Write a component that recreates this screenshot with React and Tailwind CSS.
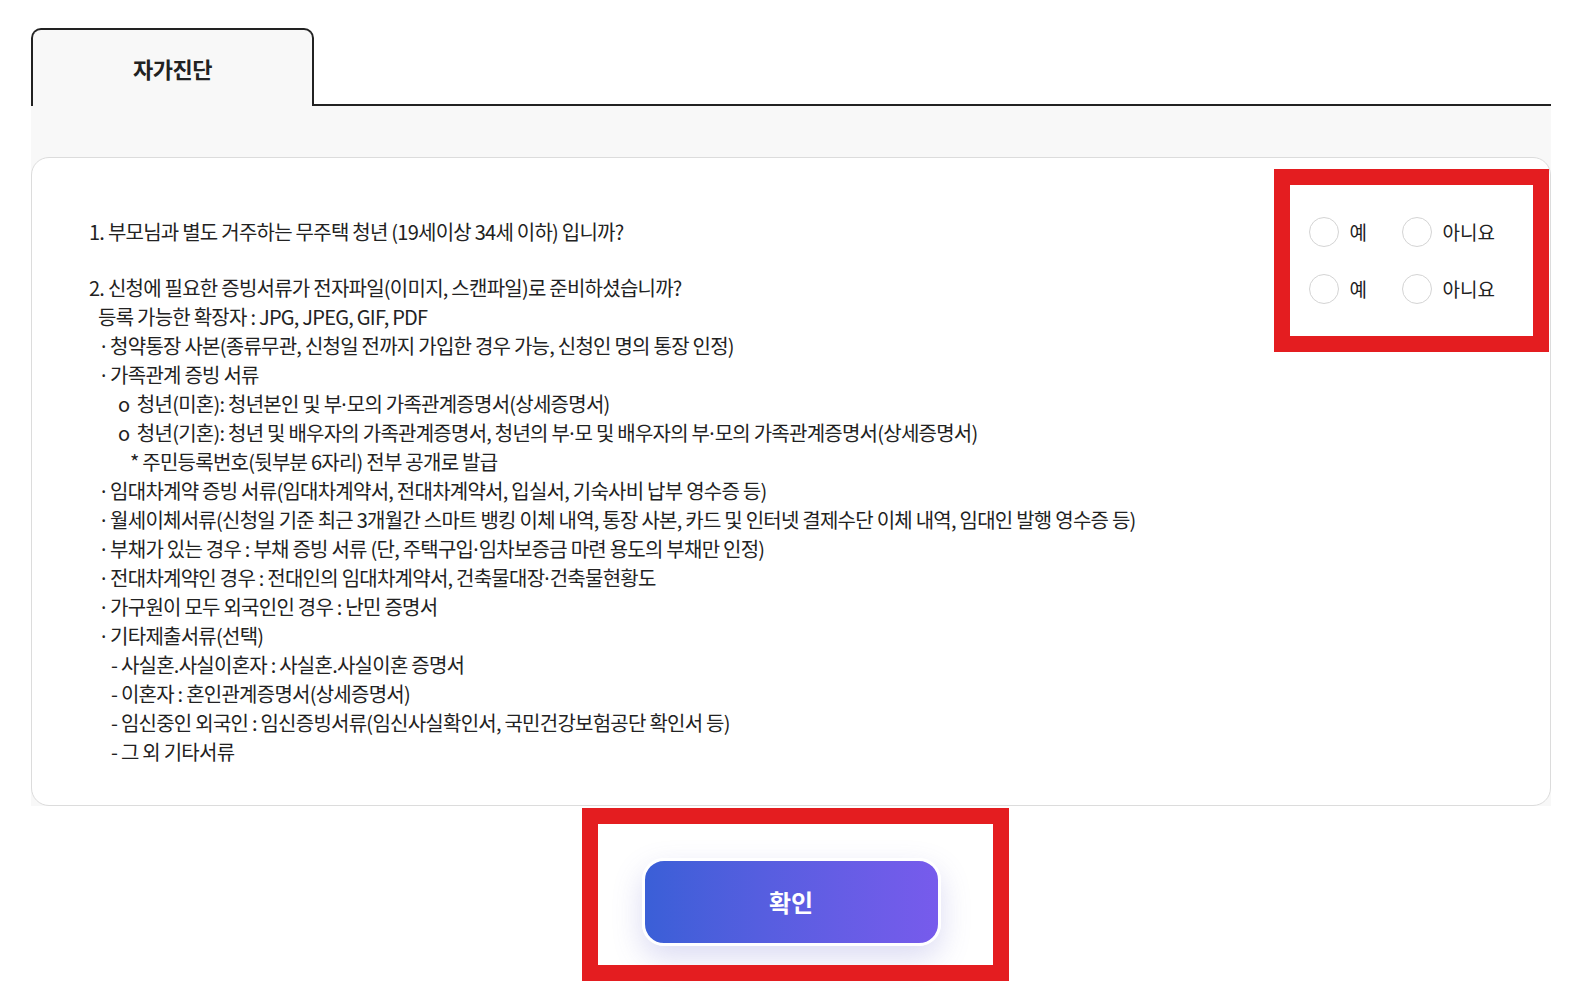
const lines = [
   { text: '2. 신청에 필요한 증빙서류가 전자파일(이미지, 스캔파일)로 준비하셨습니까?', indent: 'pl-0' },
   { text: '등록 가능한 확장자 : JPG, JPEG, GIF, PDF', indent: 'pl-[9px]' },
   { text: '· 청약통장 사본(종류무관, 신청일 전까지 가입한 경우 가능, 신청인 명의 통장 인정)', indent: 'pl-[12px]' },
   { text: '· 가족관계 증빙 서류', indent: 'pl-[12px]' },
   { text: 'o\u00a0 청년(미혼): 청년본인 및 부·모의 가족관계증명서(상세증명서)', indent: 'pl-[29px]' },
   { text: 'o\u00a0 청년(기혼): 청년 및 배우자의 가족관계증명서, 청년의 부·모 및 배우자의 부·모의 가족관계증명서(상세증명서)', indent: 'pl-[29px]' },
   { text: '* 주민등록번호(뒷부분 6자리) 전부 공개로 발급', indent: 'pl-[41px]' },
   { text: '· 임대차계약 증빙 서류(임대차계약서, 전대차계약서, 입실서, 기숙사비 납부 영수증 등)', indent: 'pl-[12px]' },
   { text: '· 월세이체서류(신청일 기준 최근 3개월간 스마트 뱅킹 이체 내역, 통장 사본, 카드 및 인터넷 결제수단 이체 내역, 임대인 발행 영수증 등)', indent: 'pl-[12px]' },
   { text: '· 부채가 있는 경우 : 부채 증빙 서류 (단, 주택구입·임차보증금 마련 용도의 부채만 인정)', indent: 'pl-[12px]' },
   { text: '· 전대차계약인 경우 : 전대인의 임대차계약서, 건축물대장·건축물현황도', indent: 'pl-[12px]' },
   { text: '· 가구원이 모두 외국인인 경우 : 난민 증명서', indent: 'pl-[12px]' },
   { text: '· 기타제출서류(선택)', indent: 'pl-[12px]' },
   { text: '- 사실혼.사실이혼자 : 사실혼.사실이혼 증명서', indent: 'pl-[22px]' },
   { text: '- 이혼자 : 혼인관계증명서(상세증명서)', indent: 'pl-[22px]' },
   { text: '- 임신중인 외국인 : 임신증빙서류(임신사실확인서, 국민건강보험공단 확인서 등)', indent: 'pl-[22px]' },
   { text: '- 그 외 기타서류', indent: 'pl-[22px]' },
];

// the middle dot is narrow in the original, so set it in a latin face
function Line({ text }) {
   const parts = text.split('·');
   return parts.map((p, i) => (
      <span key={i}>
         {i > 0 && (
            <span className="font-['Noto_Sans'] leading-none tracking-normal">·</span>
         )}
         {p}
      </span>
   ));
}

function Radio({ label }) {
   return (
      <label className="flex items-center gap-[11px]">
         <span className="h-[30px] w-[30px] rounded-full border border-[#d4d4d4] bg-white" />
         <span className="text-[19px] text-[#222]">{label}</span>
      </label>
   );
}

function RadioRow() {
   return (
      <div className="grid grid-cols-[93px_auto] items-center">
         <Radio label="예" />
         <Radio label="아니요" />
      </div>
   );
}

export default function App() {
   return (
      <div
         className="relative min-h-[995px] bg-white px-[31px] pt-[28px] text-[#222]"
         style={{ fontFamily: '"Noto Sans CJK KR", "Noto Sans", sans-serif' }}
      >
         <div className="w-[1520px]">
            {/* tabs */}
            <div className="flex items-end">
               <div className="flex h-[78px] w-[283px] items-center justify-center rounded-t-[10px] border-2 border-b-0 border-[#222] bg-[#f8f8f8] pt-[1px] text-[22px] font-bold tracking-[-0.5px]">
                  자가진단
               </div>
               <div className="flex-1 border-b-2 border-[#222]" />
            </div>

            {/* panel */}
            <div className="bg-[#f8f8f8] pt-[51px]">
               <div className="flex h-[649px] justify-between rounded-[18px] border border-[#dcdcdc] bg-white pl-[57px] pr-[55px] pt-[59px]">
                  <div className="text-[20px] leading-[29px] tracking-[-0.75px] text-[#222]">
                     <p>1. 부모님과 별도 거주하는 무주택 청년 (19세이상 34세 이하) 입니까?</p>
                     <div className="h-[27px]" />
                     {lines.map((l, i) => (
                        <p key={i} className={`h-[29px] whitespace-nowrap ${l.indent}`}>
                           <Line text={l.text} />
                        </p>
                     ))}
                  </div>
                  <div className="flex flex-col gap-[27px]">
                     <RadioRow />
                     <RadioRow />
                  </div>
               </div>
            </div>

            {/* button */}
            <div className="flex justify-center pt-[52px]">
               <button className="h-[88px] w-[299px] rounded-[22px] border-[3px] border-white bg-gradient-to-r from-[#3a5fd7] to-[#775bec] text-[24px] font-bold text-white shadow-[0_12px_30px_rgba(90,90,200,0.22)]">
                  확인
               </button>
            </div>
         </div>

         {/* annotation boxes */}
         <div className="pointer-events-none absolute left-[1274px] top-[169px] h-[183px] w-[275px] border-[16px] border-[#e41d20]" />
         <div className="pointer-events-none absolute left-[582px] top-[808px] h-[173px] w-[427px] border-[16px] border-[#e41d20]" />
      </div>
   );
}
